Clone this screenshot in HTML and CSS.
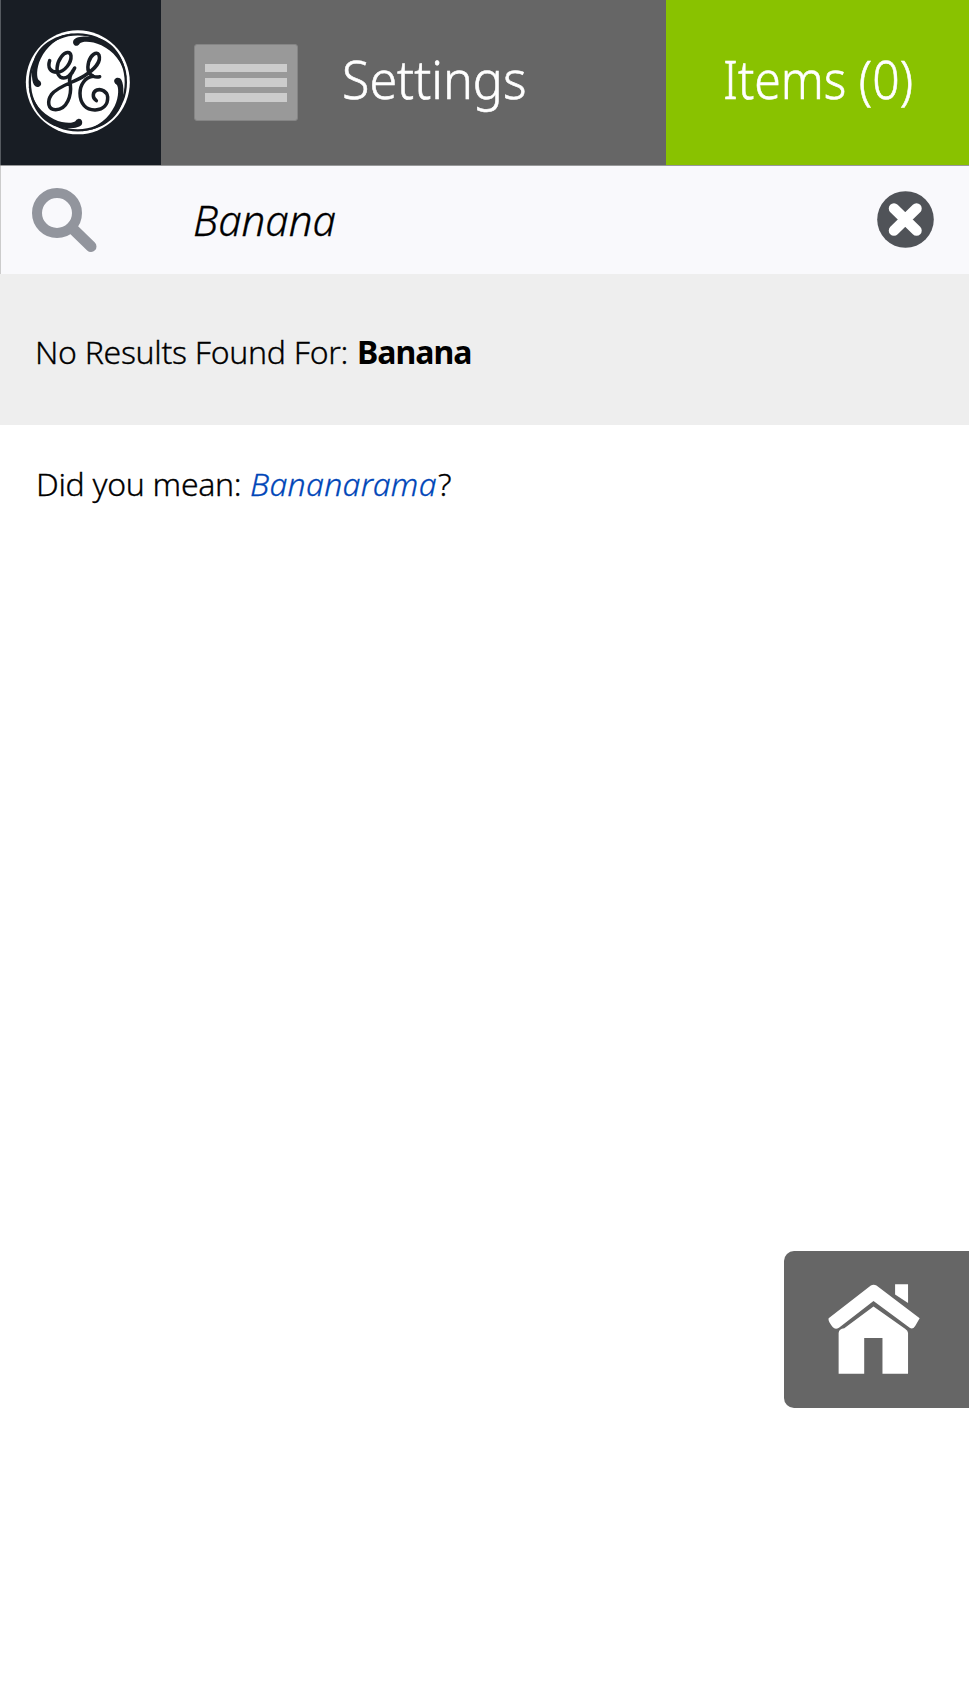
FILE: index.html
```html
<!DOCTYPE html>
<html lang="en">
<head>
<meta charset="utf-8">
<title>Search</title>
<link rel="stylesheet" href="styles.css">
</head>
<body>
<header class="topbar">
  <a class="logo">
    <svg width="161" height="165" viewBox="0 0 483 495" fill="none" stroke-linecap="round" stroke-linejoin="round">
      <circle cx="233.500" cy="247" r="156" fill="#fff"/>
      <circle cx="233.500" cy="247" r="144" stroke="#181d24" stroke-width="7"/>
      <g fill="#181d24">
        <path id="swirl" d="M232 137C222 140 216 128 221 120C230 108 268 106 304 117C342 133 373 170 380 235C367 184 340 154 304 136C275 122 246 124 240 130Q237 136 232 137Z"/>
        <use href="#swirl" transform="rotate(90 233 247)"/>
        <use href="#swirl" transform="rotate(180 233 247)"/>
        <use href="#swirl" transform="rotate(270 233 247)"/>
      </g>
      <g stroke="#181d24" stroke-width="10.500">
        <path d="M149 182C142 203 151 216 171 217C194 216 215 188 213 167C211 153 195 155 184 170C169 190 166 220 181 231C197 242 217 222 224 204C211 220 205 240 211 253C215 285 202 329 167 329C143 329 141 303 154 284C175 256 222 248 252 228C281 210 304 186 297 165C290 152 272 165 266 186C261 205 265 222 280 229Q289 232 299 230"/>
        <path d="M280 229C255 232 240 254 240 280C240 311 258 331 286 330C311 328 324 313 323 291C321 274 304 266 291 270C277 275 276 293 289 302"/>
      </g>
    </svg>
  </a>
  <nav class="menu">
    <span class="burger"><i></i><i></i><i></i></span>
    <span class="settings">Settings</span>
  </nav>
  <div class="items"><span>Items (0)</span></div>
</header>
<div class="search">
  <svg class="glass" width="66" height="66" viewBox="0 0 66 66" fill="none" stroke="#92959d" stroke-width="10">
    <circle cx="25" cy="25" r="20"/>
    <path d="M41 41L59 58.500" stroke-width="11" stroke-linecap="round"/>
  </svg>
  <span class="query">Banana</span>
  <svg class="clear" width="57" height="57" viewBox="0 0 57 57">
    <circle cx="28.500" cy="28.500" r="28.300" fill="#505358"/>
    <path d="M17 17.500L39.500 39.500M39.500 17.500L17 39.500" stroke="#fff" stroke-width="10.500" stroke-linecap="round"/>
  </svg>
</div>
<section class="notice"><span class="label">No Results Found For:</span><b>Banana</b></section>
<p class="suggest"><span class="label">Did you mean:</span><em>Bananarama</em><span>?</span></p>
<a class="home">
  <svg width="92" height="90" viewBox="173 132 277 270" fill="#fff">
    <path d="M302 136Q310 131 319 136L449 235L436 257Q429 269 420 264L310 183L206 263Q195 270 187 261Q172 243 175 235Z"/>
    <path d="M375 132H414V189L375 163Z"/>
    <path d="M310 199L405 266Q414 271 414 279V402H337V294H282V402H205V279Q206 267 222 265Z"/>
  </svg>
</a>
</body>
</html>
```
FILE: styles.css
```css
body { margin: 0; height: 1706px; position: relative; background: #fff; color: #000; font-family: "Noto Sans", sans-serif; font-weight: 300; overflow: hidden; -webkit-text-stroke: 0.3px currentColor; }
.topbar { display: flex; box-sizing: border-box; height: 166px; border-bottom: 1px solid #98999a; color: #fff; font-size: 53px; -webkit-text-stroke-width: 0.6px; }
.logo { width: 161px; background: #181d24; box-shadow: inset 1px 0 #555a60; }
.logo svg { display: block; }
.menu { flex: 1; display: flex; align-items: center; background: #666; padding-left: 33px; }
.burger { display: flex; flex-direction: column; gap: 6px; box-sizing: border-box; width: 104px; height: 77px; padding: 18.5px 10px 0; background: #999; border: 1px solid #858585; border-radius: 3px; }
.burger i { height: 8.7px; background: #ccc; }
.settings { margin-left: 44px; line-height: 72px; margin-top: -7px; transform: scaleX(0.947); transform-origin: left; }
.items { display: flex; align-items: center; box-sizing: border-box; width: 303px; padding-left: 57px; background: #89c200; }
.items span { white-space: nowrap; line-height: 72px; margin-top: -7px; transform: scaleX(0.907); transform-origin: left; }
.search { display: flex; box-sizing: border-box; height: 108px; padding-right: 35px; background: #f9f9fc; border-left: 1px solid #ccc; }
.glass { margin: 22px 0 0 31px; }
.query { flex: 1; margin-left: 95px; line-height: 107px; font-size: 42px; font-style: italic; }
.clear { margin-top: 25px; }
.notice { display: flex; height: 151px; box-sizing: border-box; padding: 54px 0 0 35px; background: #eee; font-size: 32px; line-height: 48px; }
.notice b { font-weight: 700; letter-spacing: -1px; -webkit-text-stroke-width: 0; }
.label { flex: none; width: 322px; white-space: nowrap; letter-spacing: -0.3px; }
.suggest { display: flex; margin: 0; padding: 35px 0 0 36px; font-size: 32px; line-height: 48px; }
.suggest .label { width: 214px; }
.suggest em { width: 188px; color: #0046b8; letter-spacing: 0.3px; }
.home { position: absolute; right: 0; top: 1251px; width: 185px; height: 157px; box-sizing: border-box; padding: 33px 0 0 44px; background: #666; border-radius: 10px 0 0 10px; }
```
